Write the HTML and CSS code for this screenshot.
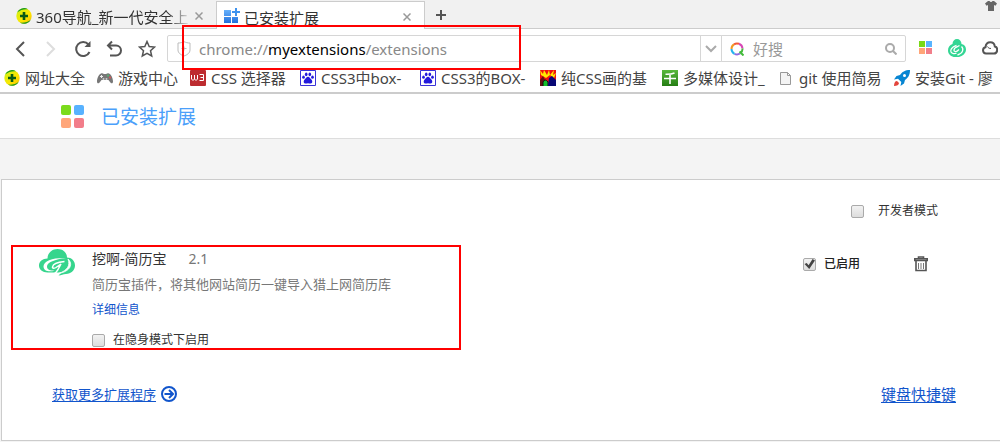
FILE: index.html
```html
<!DOCTYPE html>
<html lang="zh-CN">
<head>
<meta charset="utf-8">
<title>已安装扩展</title>
<link rel="stylesheet" href="styles.css">
</head>
<body>
<svg class="defs" aria-hidden="true">
  <defs>
    <linearGradient id="ball" x1="0" y1="0" x2="1" y2="1"><stop offset="0.2" stop-color="#d8ef10"/><stop offset="0.6" stop-color="#ffe600"/><stop offset="1" stop-color="#f2b800"/></linearGradient>
    <linearGradient id="tile" x1="0" y1="0" x2="0" y2="1"><stop offset="0" stop-color="#67b1fb"/><stop offset="1" stop-color="#2270dc"/></linearGradient>
    <linearGradient id="leaf" x1="0" y1="0" x2="0" y2="1"><stop offset="0" stop-color="#58b83c"/><stop offset="1" stop-color="#257d14"/></linearGradient>
    <symbol id="i-360" viewBox="0 0 16 16"><circle cx="8" cy="8" r="7.7" fill="url(#ball)"/><path d="M1 4.5A7.7 7.7 0 0 1 12 1.3C8 .8 4.200 2 1 4.500ZM15 11.500A7.700 7.700 0 0 1 4 14.600C8.500 15 12 14 15 11.500Z" fill="#159a20"/><path d="M8 4v8M4 8h8" stroke="#075b16" stroke-width="2.600"/></symbol>
    <symbol id="i-baidu" viewBox="0 0 16 16"><path d="M.5.5h15v15H.500Z" fill="#fff" stroke="#3a32d8"/><g fill="#2319dc"><ellipse cx="6.200" cy="4.300" rx="1.300" ry="1.900"/><ellipse cx="9.800" cy="4.300" rx="1.300" ry="1.900"/><ellipse cx="3.500" cy="7.200" rx="1.300" ry="1.600"/><ellipse cx="12.500" cy="7.200" rx="1.300" ry="1.600"/><path d="M8 6.800c1.600 0 2 1.500 3.300 2.700 1.600 1.500 1.200 4-.8 4-1 0-1.500-.3-2.500-.3s-1.500.3-2.500.3c-2 0-2.400-2.500-.8-4C6 8.300 6.400 6.800 8 6.800Z"/></g></symbol>
    <symbol id="i-cloud" viewBox="0 0 36 27"><path d="M8.500 9.500C8.500 4 13 0 18.500 0S28 3.500 28 8.500c4.500 0 8 3.500 8 8 0 5-4 8-9 8.500-3 .2-4.500 1.500-7.500 1.500l3-3H8.500C3.500 23.500 0 20.500 0 16.500c0-4 3.500-7 8.500-7Z" fill="#36d58d"/><path d="M27 9C14 8.500 4.500 12 4.500 17.500c0 4.500 6 6 11 4C11 22 8 20.500 8 17.500 8 13 16 10.500 27 9Z" fill="#fff"/><path d="M29 10c5.500 5 2.500 12.500-9.500 14.500C28.500 21.500 31.500 16.500 29 10Z" fill="#fff" stroke="#fff" stroke-width=".8"/><path d="M25.500 12.500c-6 .5-11.500 2.500-12 5.500-.2 1.500 2 1.500 3.500.5l5-3.500-3 5.500c-1.200 2-2 3.500-4 4.500" fill="none" stroke="#fff" stroke-width="1.500"/></symbol>
  </defs>
</svg>

<header class="browser">
  <div class="tabstrip">
    <div class="tab">
      <svg class="icon"><use href="#i-360"/></svg>
      <span class="tab-title fade">360导航_新一代安全上</span>
      <button class="close" aria-label="关闭标签"><svg viewBox="0 0 8 8"><path d="m.5.5 7 7m0-7-7 7"/></svg></button>
    </div>
    <div class="tab active">
      <svg class="icon" viewBox="0 0 16 16"><path d="M0 2h7v6H0ZM0 9h7v6H0ZM8 9h6v6H8Z" fill="url(#tile)"/><path d="M12 0v8M8 4h8" stroke="#3e92ee" stroke-width="2"/></svg>
      <span class="tab-title">已安装扩展</span>
      <button class="close" aria-label="关闭标签"><svg viewBox="0 0 8 8"><path d="m.5.5 7 7m0-7-7 7"/></svg></button>
    </div>
    <button class="new-tab" aria-label="新标签"><svg viewBox="0 0 10 10"><path d="M5 0v10M0 5h10"/></svg></button>
    <button class="skin" aria-label="皮肤"><svg viewBox="0 0 12 10"><path d="M3 0h1.500C5 1.300 7 1.300 7.500 0H9l3 2.500-1.500 2.200L9 4v6H3V4l-1.500.7L0 2.500Z"/></svg></button>
  </div>

  <div class="toolbar">
    <nav class="nav">
      <button aria-label="后退"><svg viewBox="0 0 18 18"><path d="M14 2 7 9l7 7"/></svg></button>
      <button aria-label="前进" class="off"><svg viewBox="0 0 18 18"><path d="m5 2 7 7-7 7"/></svg></button>
      <button aria-label="刷新"><svg viewBox="0 0 18 18"><path d="M15.500 12A7 7 0 1 1 14.500 4.500"/><path d="M16.500 1v6h-6Z" class="solid"/></svg></button>
      <button aria-label="恢复"><svg viewBox="0 0 18 18"><path d="M6 1.500 2 5.500l4 4M2.500 5.500H10a5 5 0 0 1 0 10H4"/></svg></button>
      <button aria-label="收藏"><svg viewBox="0 0 18 18"><path class="thin" d="m9 1.500 2.200 5 5.300.6-4 3.600 1.200 5.300L9 13.300 4.300 16l1.200-5.300-4-3.600 5.300-.6Z"/></svg></button>
    </nav>
    <div class="address">
      <svg class="shield" viewBox="0 0 14 16"><path d="M1 2c2.500 0 4-.5 6-1.300C9 1.500 10.500 2 13 2v7c0 3-3 5-6 6-3-1-6-3-6-6ZM4.500 7.500h5M7 5.500v4"/></svg>
      <div class="url" role="textbox" aria-label="地址栏" contenteditable="true" spellcheck="false">chrome://<span class="host">myextensions</span>/extensions</div>
      <button class="drop" aria-label="历史网址"><svg viewBox="0 0 12 8"><path d="m1 1 5 5 5-5"/></svg></button>
    </div>
    <div class="search">
      <svg class="engine" viewBox="0 0 14 14" fill="none" stroke-width="2"><path d="M1.500 7A5.500 5.500 0 0 1 4 2.300" stroke="#f29a22"/><path d="M4 2.300A5.500 5.500 0 0 1 9 1.800" stroke="#f45a35"/><path d="M9 1.800A5.500 5.500 0 0 1 12.500 6.500" stroke="#d847b5"/><path d="M12.500 6.500A5.500 5.500 0 0 1 10 11.500M9.500 9.500l4 4" stroke="#43bb3a"/><path d="M10 11.500A5.500 5.500 0 0 1 4.500 11.800" stroke="#8b6be0"/><path d="M4.500 11.800A5.500 5.500 0 0 1 1.500 7" stroke="#25b4ee"/></svg>
      <input type="text" placeholder="好搜" aria-label="搜索">
      <button class="go" aria-label="搜索"><svg viewBox="0 0 12 12"><circle cx="5" cy="5" r="4"/><path d="m8 8 3.500 3.500"/></svg></button>
    </div>
    <div class="plugins">
      <button aria-label="扩展"><svg class="squares" viewBox="0 0 13 13"><path fill="#78d917" d="M0 0h6v6H0Z"/><path fill="#58b4ff" d="M7 0h6v6H7Z"/><path fill="#ffa578" d="M0 7h6v6H0Z"/><path fill="#f17e8a" d="M7 7h6v6H7Z"/></svg></button>
      <button aria-label="简历宝"><svg class="mini" viewBox="0 0 18 18"><path d="M4.500 5C4.500 2 6.500 0 9 0s4.500 2 4.500 5c3.300.8 4.500 3 4.500 5.500 0 4-3.500 6.500-7 7.500H7c-3.500 0-7-2.500-7-6.500C0 8.500 1.500 6 4.500 5Z" fill="#34d694"/><path d="M11.500 6.500 8 8.300C5.500 9.800 5.500 12 7 12.500s2.500-.5 4-2M8.500 6.300C3.500 8 2 11 3 13s4 2 5.500 1M13.500 7.500c2.500 2.500 1.500 7-4 8.500" fill="none" stroke="#fff" stroke-width="1.300"/></svg></button>
      <button aria-label="云服务"><svg class="outline" viewBox="0 0 16 14"><path d="M4 12.500a3.200 3.200 0 0 1-.5-6.300C3.800 3 5.800 1.200 8.300 1.200c2.600 0 4.200 1.800 4.500 4.200 3.400.6 3.200 7.100-.8 7.100Z"/><path class="thin" d="M5.500 5.500c.7 1.500 2 2.200 3.500 1.900"/></svg></button>
    </div>
  </div>

  <nav class="bookmarks">
    <a href="#"><svg class="icon"><use href="#i-360"/></svg>网址大全</a>
    <a href="#"><svg class="icon" viewBox="0 0 16 16"><path d="M4 3.500c2-1 2 .5 4 .5s2-1.500 4-.5c2.500 1 4 5 4 8 0 2.500-2 2-3 .5L11.500 10h-7L3 12c-1 1.500-3 2-3-.5 0-3 1.500-7 4-8Z" fill="#777"/><path d="M3 6.500h3M4.500 5v3" stroke="#eee"/><circle cx="11" cy="5.500" r="1" fill="#55b36c"/><circle cx="13" cy="7.500" r="1" fill="#e65050"/><circle cx="6.500" cy="9" r="1" fill="#ccc"/><circle cx="9.500" cy="9" r="1" fill="#ccc"/></svg>游戏中心</a>
    <a href="#"><svg class="icon" viewBox="0 0 16 16"><rect width="16" height="16" rx="1" fill="#bd2c30"/><path d="M1.500 5v4l1.500 1.500L4.500 9V5v4L6 10.500 7.500 9V5M9.500 4.500H13.500v6H9.500M10.500 7.500H13.500" fill="none" stroke="#fff"/></svg>CSS 选择器</a>
    <a href="#"><svg class="icon"><use href="#i-baidu"/></svg>CSS3中box-</a>
    <a href="#"><svg class="icon"><use href="#i-baidu"/></svg>CSS3的BOX-</a>
    <a href="#"><svg class="icon" viewBox="0 0 16 16"><path fill="#f01010" d="M0 0h16v16H0Z"/><path fill="#ffe900" d="m0 0 3 4 1-4 3 5 2-5 1 5 4-5-1 5 3-2-2 5-4-3-4 3-5-3Z"/><path fill="#611" d="M0 10 3 6l5 10H0Z"/><path d="M3 16v-4q2-4 5 0v4" fill="#13bf2a" stroke="#111"/><path fill="#080875" d="M8 16 9 8l3-2 4 4v6Z"/></svg>纯CSS画的基</a>
    <a href="#"><svg class="icon" viewBox="0 0 16 16"><path fill="url(#leaf)" d="M0 0h16v16H0Z"/><path d="M12.500 3Q9 4.500 3.500 4.300M2 8.500h12M8 4v10" fill="none" stroke="#fff" stroke-width="1.600"/></svg>多媒体设计_</a>
    <a href="#"><svg class="icon" viewBox="0 0 16 16"><path d="M2.500 2.500h7l3 3v9h-10ZM9.500 2.500v3h3" fill="#f4f4f4" stroke="#999"/></svg>git 使用简易</a>
    <a href="#"><svg class="icon" viewBox="0 0 16 16"><path fill="#0785d2" d="M16 0c-5 0-8 2-10 5L2.500 6 0 9.500l4-.8 3.300 3.300-.8 4 3.500-2.500 1-3.500c3-2 5-5 5-10Z"/><circle cx="10.500" cy="5.500" r="1.500" fill="#fff"/><path fill="#e3453c" d="M3 11c-2 0-3 2-3 5 3 0 5-1 5-3Z"/></svg>安装Git - 廖</a>
  </nav>
  <div class="mark mark-url"></div>
</header>

<main class="page">
  <div class="page-head">
    <svg class="logo" viewBox="0 0 23 23"><rect width="10" height="10" rx="2" fill="#7bdb1c"/><rect x="13" width="10" height="10" rx="2" fill="#58b2ff"/><rect y="13" width="10" height="10" rx="2" fill="#ffa67a"/><rect x="13" y="13" width="10" height="10" rx="2" fill="#f27d8a"/></svg>
    <h1>已安装扩展</h1>
  </div>

  <section class="panel">
    <label class="dev"><input type="checkbox">开发者模式</label>

    <article class="ext">
      <svg class="ext-logo"><use href="#i-cloud"/></svg>
      <div class="ext-info">
        <h2>挖啊-简历宝<span class="version">2.1</span></h2>
        <p>简历宝插件，将其他网站简历一键导入猎上网简历库</p>
        <a href="#">详细信息</a>
        <label class="incognito"><input type="checkbox">在隐身模式下启用</label>
      </div>
      <label class="enabled"><input type="checkbox" checked>已启用</label>
      <button class="trash" aria-label="删除"><svg viewBox="0 0 14 16"><path d="M4.500 2V1h5v1M.8 4.500V2.800h12.400v1.700ZM2 5v9.500h10V5" fill="none" stroke="#555" stroke-width="1.600"/><path d="M4.500 7v6M7 7v6M9.500 7v6" stroke="#777"/></svg></button>
      <div class="mark mark-ext"></div>
    </article>

    <footer class="links">
      <a class="more" href="#"><span>获取更多扩展程序</span><svg viewBox="0 0 16 16"><circle cx="8" cy="8" r="7"/><path d="M3.500 8h8M8 4l4 4-4 4"/></svg></a>
      <a class="keys" href="#">键盘快捷键</a>
    </footer>
  </section>
</main>
</body>
</html>
```
FILE: styles.css
```css
* { box-sizing: border-box; }

body {
  margin: 0;
  background: #f4f4f4;
  color: #333;
  font: 15px/20px "Noto Sans", "Noto Sans CJK SC", sans-serif;
  overflow-x: hidden;
}

button {
  display: flex;
  flex: none;
  align-items: center;
  justify-content: center;
  padding: 0;
  border: 0;
  background: none;
}

svg { display: block; flex: none; }
.defs { position: absolute; width: 0; height: 0; }
.icon { width: 16px; height: 16px; }

.browser { position: relative; background: #fff; }

/* Tabs */
.tabstrip {
  display: flex;
  height: 29px;
  padding-top: 1px;
  background: #f1f1f1;
  box-shadow: inset 0 -1px #ccc;
}
.tab {
  display: flex;
  align-items: center;
  gap: 4px;
  width: 216px;
  padding: 4px 13px 0 16px;
}
.tab.active {
  width: 209px;
  padding-left: 7px;
  border: 1px solid #ccc;
  border-bottom: 0;
  background: #fff;
}
.tab .icon { margin-bottom: 3px; }
.tab-title { flex: 1; overflow: hidden; white-space: nowrap; }
.fade { mask-image: linear-gradient(to right, #000 86%, transparent); }
.close svg {
  width: 8px;
  height: 8px;
  fill: none;
  stroke: #999;
  stroke-width: 1.5;
}
.close { padding-bottom: 2px; }
.new-tab { width: 32px; }
.new-tab svg { width: 10px; height: 10px; stroke: #555; stroke-width: 2; }
.skin { align-items: flex-start; margin-left: auto; padding-right: 3px; }
.skin svg { width: 12px; height: 10px; fill: #666; }

/* Toolbar */
.toolbar { display: flex; align-items: center; padding-top: 6px; }
.nav { display: flex; gap: 14px; width: 167px; padding-left: 10px; }
.nav svg { width: 18px; height: 18px; fill: none; stroke: #555; stroke-width: 2; }
.nav .thin { stroke-width: 1.5; }
.nav .solid { fill: #555; stroke: none; }
.nav .off svg { stroke: #ddd; }
.address, .search {
  display: flex;
  align-items: center;
  height: 27px;
  border: 1px solid #d6d6d6;
}
.address { flex: 1; padding-left: 9px; border-radius: 2px 0 0 2px; }
.shield { width: 14px; height: 16px; fill: none; stroke: #bbb; }
.url { flex: 1; padding-left: 8px; color: #888; white-space: nowrap; outline: 0; }
.host { color: #000; }
.drop { align-self: stretch; width: 21px; border-left: 1px solid #d6d6d6; }
.drop svg { width: 12px; height: 8px; fill: none; stroke: #aaa; stroke-width: 2; }
.search { width: 185px; padding: 0 8px; margin-left: -1px; border-radius: 0 2px 2px 0; }
.engine { width: 14px; height: 14px; }
.search input {
  flex: 1;
  min-width: 0;
  padding: 0 0 0 9px;
  border: 0;
  outline: 0;
  background: none;
  font: inherit;
}
.search input::placeholder { color: #999; opacity: 1; }
.go svg { width: 12px; height: 12px; fill: none; stroke: #aaa; stroke-width: 2; }
.plugins { display: flex; align-items: center; gap: 16px; width: 94px; padding: 0 0 2px 13px; }
.plugins .squares { width: 13px; height: 13px; }
.plugins .mini { width: 18px; height: 18px; }
.plugins .outline { width: 16px; height: 14px; fill: none; stroke: #555; stroke-width: 2; }
.plugins .outline .thin { stroke-width: 1; }

/* Bookmarks */
.bookmarks {
  display: grid;
  grid-template-columns: 81px 81px 98px 108px 108px 110px 104px 104px auto;
  column-gap: 12px;
  height: 32px;
  padding: 1px 4px 0;
  border-bottom: 2px solid #ccc;
  overflow: hidden;
}
.bookmarks a {
  display: flex;
  align-items: center;
  gap: 5px;
  color: #444;
  text-decoration: none;
  white-space: nowrap;
}

/* Page */
.page-head {
  display: flex;
  align-items: center;
  gap: 17px;
  height: 45px;
  padding-left: 61px;
  border-bottom: 1px solid #ddd;
  background: #fff;
}
.logo { width: 23px; height: 23px; }
h1 { margin: 0; padding-top: 2px; color: #4b9ffa; font-size: 19px; font-weight: 400; }
.panel {
  margin: 40px 0 0 1px;
  padding: 21px 44px 36px 37px;
  border: 1px solid #ccc;
  border-right: 0;
  background: #fff;
}

label { display: flex; align-items: center; font-size: 12px; }
input[type="checkbox"] {
  appearance: none;
  width: 13px;
  height: 13px;
  margin: 0 8px 0 0;
  border: 1px solid #aaa;
  border-radius: 2px;
  background: linear-gradient(#f2f2f2, #ddd);
}
input[type="checkbox"]:checked::before {
  content: "";
  display: block;
  width: 11px;
  height: 11px;
  background: #444;
  clip-path: polygon(5% 50%, 25% 40%, 42% 62%, 78% 5%, 100% 18%, 48% 95%);
}
.dev { justify-content: flex-end; padding-right: 18px; }
.dev input { margin-right: 14px; }

.ext {
  position: relative;
  display: flex;
  align-items: flex-start;
  margin-top: 28px;
}
.ext-logo { width: 36px; height: 27px; margin-right: 17px; }
.ext-info { flex: 1; }
h2 { display: flex; gap: 22px; margin: 0; font-size: 14px; font-weight: 400; }
.version { color: #777; }
.ext p { margin: 5px 0 6px; color: #777; font-size: 13px; }
.ext-info > a { display: block; color: #15c; font-size: 12px; text-decoration: none; }
.incognito { margin-top: 10px; }
.enabled { margin: 5px 54px 0 0; color: #222; font-weight: 500; }
.trash { margin: 7px 28px 0 0; }
.trash svg { width: 14px; height: 16px; }

.links {
  display: flex;
  align-items: center;
  justify-content: space-between;
  margin-top: 34px;
  padding-left: 13px;
}
.links a { color: #15c; text-underline-offset: 2px; }
.links .more { display: flex; align-items: center; gap: 5px; font-size: 13px; text-decoration: none; }
.more span { text-decoration: underline; }
.more svg { width: 16px; height: 16px; fill: none; stroke: #15c; stroke-width: 2; }

/* Highlight frames laid over the content */
.mark { position: absolute; border: 2px solid #f00; pointer-events: none; }
.mark-url { left: 182px; top: 25px; width: 339px; height: 45px; }
.mark-ext { left: -28px; top: -4px; width: 450px; height: 105px; }
```
